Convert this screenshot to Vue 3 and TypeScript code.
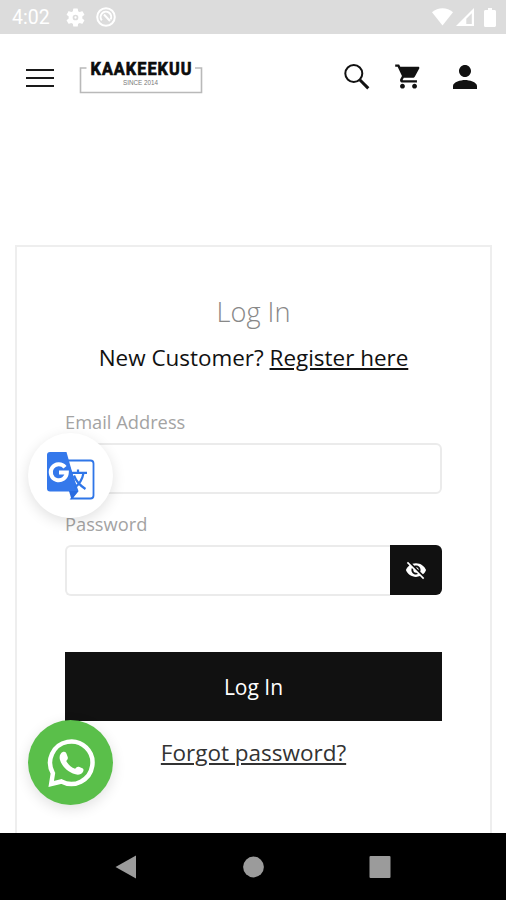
<template>
  <div class="screen">
    <div class="status-bar">
      <span class="clock">4:02</span>
      <svg class="status-gear" viewBox="2 2 20 20">
        <path
          d="M19.14 12.94c.04-.3.06-.61.06-.94s-.02-.64-.07-.94l2.03-1.58a.49.49 0 0 0 .12-.61l-1.92-3.32a.49.49 0 0 0-.59-.22l-2.39.96c-.5-.38-1.03-.7-1.62-.94l-.36-2.54a.48.48 0 0 0-.48-.41h-3.84a.48.48 0 0 0-.47.41l-.36 2.54c-.59.24-1.13.57-1.62.94l-2.39-.96a.48.48 0 0 0-.59.22L2.74 8.87a.48.48 0 0 0 .12.61l2.03 1.58c-.05.3-.09.63-.09.94s.02.64.07.94l-2.03 1.58a.49.49 0 0 0-.12.61l1.92 3.32c.12.22.37.29.59.22l2.39-.96c.5.38 1.03.7 1.62.94l.36 2.54c.05.24.24.41.48.41h3.84c.24 0 .44-.17.47-.41l.36-2.54c.59-.24 1.13-.56 1.62-.94l2.39.96c.22.08.47 0 .59-.22l1.92-3.32a.48.48 0 0 0-.12-.61zM12 15a3 3 0 1 1 0-6 3 3 0 0 1 0 6z"
        />
        <circle cx="12" cy="12" r="1.2" />
      </svg>
      <svg class="status-sync" viewBox="0 0 20 20">
        <circle cx="10" cy="10" r="8.8" />
        <path d="M5.800 13.300A5.300 5.300 0 1 1 14.600 12.400M8 7.500l6 6.500" />
      </svg>
      <div class="status-right">
        <svg width="21" height="18" viewBox="0 0 21 18">
          <path d="M0 4.2C6 -1 15 -1 21 4.2L10.5 17.5z" />
        </svg>
        <svg width="19" height="18" viewBox="0 0 19 18">
          <path fill-rule="evenodd" d="M0 18L18 0v18zM10.3 16h5.500V5.200l-5.500 5.500z" />
        </svg>
        <svg class="battery" width="12" height="19" viewBox="0 0 12 19">
          <path d="M4 0h4v2h2.500c.8 0 1.500.7 1.500 1.500v14c0 .8-.7 1.500-1.500 1.500h-9A1.500 1.500 0 0 1 0 17.500V3.500C0 2.700.7 2 1.500 2H4z" />
        </svg>
      </div>
    </div>

    <header class="header">
      <button class="menu" aria-label="Menu"><i></i><i></i><i></i></button>
      <svg class="logo" width="124" height="36" viewBox="0 0 124 36">
        <path d="M7.500 9H1.500V33.500H122.500V9H116" fill="none" stroke="#b9b9b9" stroke-width="1.600" />
        <text class="brand" x="11.500" y="15.500" textLength="102" lengthAdjust="spacingAndGlyphs">KAAKEEKUU</text>
        <text class="since" x="44" y="26" textLength="35" lengthAdjust="spacingAndGlyphs">SINCE 2014</text>
      </svg>
      <div class="actions">
        <svg width="26" height="26" viewBox="0 0 26 26">
          <circle cx="9.800" cy="9.500" r="8.500" fill="none" stroke="#111" stroke-width="2" />
          <path d="M16 16L24.300 24.400" stroke="#111" stroke-width="3" />
        </svg>
        <svg class="cart" width="29" height="29" viewBox="0 0 24 24">
          <path
            d="M7 18c-1.100 0-1.990.9-1.990 2S5.900 22 7 22s2-.9 2-2-.9-2-2-2zM1 2v2h2l3.600 7.590-1.350 2.450c-.16.280-.25.610-.25.960 0 1.100.9 2 2 2h12v-2H7.420c-.14 0-.25-.11-.25-.25l.03-.12.9-1.630h7.450c.75 0 1.410-.41 1.750-1.030l3.580-6.490c.08-.14.12-.31.12-.48 0-.55-.45-1-1-1H5.210l-.94-2H1zm16 16c-1.100 0-1.990.9-1.990 2s.89 2 1.990 2 2-.9 2-2-.9-2-2-2z"
          />
        </svg>
        <svg class="person" width="36" height="36" viewBox="0 0 24 24">
          <path d="M12 12c2.210 0 4-1.790 4-4s-1.790-4-4-4-4 1.790-4 4 1.790 4 4 4zm0 2c-2.670 0-8 1.340-8 4v2h16v-2c0-2.660-5.330-4-8-4z" />
        </svg>
      </div>
    </header>

    <main class="content">
      <form class="card" @submit.prevent>
        <h1>Log In</h1>
        <p class="register">New Customer? <a href="#">Register here</a></p>
        <label for="email">Email Address</label>
        <input id="email" v-model="email" type="email" />
        <label for="password">Password</label>
        <div class="password-box">
          <input id="password" v-model="password" :type="showPassword ? 'text' : 'password'" />
          <button type="button" class="toggle" aria-label="Show password" @click="togglePassword">
            <svg width="22" height="22" viewBox="0 0 24 24">
              <path
                d="M12 7c2.760 0 5 2.240 5 5 0 .65-.13 1.260-.36 1.830l2.920 2.920c1.510-1.260 2.700-2.890 3.430-4.750-1.730-4.390-6-7.500-11-7.500-1.400 0-2.740.25-3.980.7l2.160 2.160C10.740 7.130 11.350 7 12 7zM2 4.270l2.280 2.280.46.46C3.080 8.300 1.780 10.020 1 12c1.730 4.390 6 7.500 11 7.500 1.550 0 3.030-.3 4.380-.84l.42.42L19.730 22 21 20.730 3.270 3 2 4.270zM7.530 9.800l1.550 1.550c-.05.210-.08.430-.08.650 0 1.660 1.340 3 3 3 .22 0 .44-.03.65-.08l1.550 1.550c-.67.330-1.410.530-2.200.530-2.760 0-5-2.240-5-5 0-.79.2-1.530.53-2.200zm4.310-.78l3.150 3.150.02-.16c0-1.660-1.340-3-3-3l-.17.01z"
              />
            </svg>
          </button>
        </div>
        <button type="submit" class="submit">Log In</button>
        <a href="#" class="forgot">Forgot password?</a>
      </form>
    </main>

    <button class="fab translate" aria-label="Translate">
      <svg width="48" height="48" viewBox="0 0 48 48">
        <path d="M20 8.500H43.500Q46.500 8.500 46.500 11.500V43.500Q46.500 46.500 43.500 46.500H24.500L30.500 39z" fill="#fff" stroke="#2f76e8" stroke-width="1.800" />
        <path d="M3 0H19.500L30.500 39.500H3Q0 39.500 0 36.500V3Q0 0 3 0z" fill="#3478eb" />
        <path d="M24.500 47.500L31 39L22 39z" fill="#2a6ce0" />
        <path d="M24.500 20.800H40M31 17.500V20.800M36.500 21C35.500 27 32 32.500 27.500 35.500M27 23.500C29 29 33 33.500 38.500 37" fill="none" stroke="#2f76e8" stroke-width="2.200" />
        <path d="M18 15.200A8 8 0 1 0 19.800 20.600H12" fill="none" stroke="#fff" stroke-width="4" />
      </svg>
    </button>
    <button class="fab whatsapp" aria-label="WhatsApp">
      <svg width="50" height="50" viewBox="0 0 50 50">
        <path d="M6.900 35.300A21.200 21.200 0 1 1 15.400 43.500L5.200 46z" fill="none" stroke="#fff" stroke-width="4.500" />
        <path
          d="M17.300 13.800C18.900 13.300 20 14.200 20.600 16L21.700 19C22.200 20.500 21.500 21.600 20.200 23C22.300 26.800 25.400 29.500 29.100 30.700C30.500 29.200 31.400 28.300 32.900 28.800L36.300 30.200C38 31 37.700 32.600 36.900 34C35.400 36.400 32.400 37.200 29.500 36.300C21.600 34 16.300 28.700 14.100 22.300C12.800 18.500 14.200 14.900 17.300 13.800z"
          fill="#fff"
        />
      </svg>
    </button>

    <nav class="nav-bar">
      <svg viewBox="0 0 24 24"><path d="M1.500 12L22 .5v23z" /></svg>
      <svg viewBox="0 0 24 24"><circle cx="12.500" cy="12" r="10.400" /></svg>
      <svg viewBox="0 0 24 24"><rect x="1.500" y="1" width="21" height="22" rx="1" /></svg>
    </nav>
  </div>
</template>

<script setup lang="ts">
import { ref } from 'vue'

// Form values
const email = ref<string>('')
const password = ref<string>('')
const showPassword = ref<boolean>(false)

// Functions
const togglePassword = () => {
  showPassword.value = !showPassword.value
}
</script>

<style>
body {
  margin: 0;
  background: #fff;
}
</style>

<style scoped>
.screen {
  position: relative;
  display: flex;
  flex-direction: column;
  height: 900px;
  overflow: hidden;
  background: #fff;
  font-family: 'Open Sans', 'Noto Sans', sans-serif;
  color: #111;
}
* {
  box-sizing: border-box;
}
svg {
  display: block;
  flex: none;
}
button {
  border: 0;
  padding: 0;
  font-family: inherit;
}
.status-bar {
  display: flex;
  align-items: center;
  flex: none;
  height: 34px;
  padding: 0 10px 0 12px;
  background: #dcdcdc;
  color: #fff;
}
.status-bar svg {
  fill: #fff;
}
.clock {
  width: 54px;
  font-family: Roboto, sans-serif;
  font-size: 19.5px;
  line-height: 34px;
  padding-top: 2px;
}
.status-gear {
  width: 19px;
  height: 19px;
}
.status-bar .status-sync {
  width: 20px;
  height: 20px;
  margin-left: 11px;
  fill: none;
  stroke: #fff;
  stroke-width: 2;
}
.status-right {
  display: flex;
  align-items: center;
  gap: 3px;
  margin-left: auto;
}
.battery {
  margin-left: 6px;
}
.header {
  display: flex;
  align-items: center;
  flex: none;
  height: 86px;
  padding: 0 23px 0 26px;
}
.menu {
  display: flex;
  flex-direction: column;
  gap: 6.2px;
  width: 28px;
  margin-top: 2px;
  background: none;
}
.menu i {
  height: 2.2px;
  background: #1a1a1a;
}
.logo {
  margin-left: 25px;
  overflow: visible;
}
.brand {
  font: bold 18.5px Roboto, sans-serif;
  letter-spacing: 1.2px;
  fill: #0c0c0c;
  stroke: #0c0c0c;
  stroke-width: 0.7;
}
.since {
  font: 7px 'Liberation Sans', sans-serif;
  fill: #777;
}
.actions {
  display: flex;
  align-items: center;
  margin-left: auto;
}
.actions svg {
  fill: #111;
}
.cart {
  margin-left: 24px;
  margin-top: -1px;
}
.person {
  margin-left: 24px;
  margin-top: -1px;
}
.content {
  flex: 1;
  min-height: 0;
  overflow: hidden;
  padding: 125px 14px 0 15px;
}
.card {
  display: flex;
  flex-direction: column;
  height: 640px;
  border: 2px solid #eee;
  padding: 47px 48px 0;
}
h1 {
  margin: 0;
  font-size: 27.2px;
  font-weight: 300;
  line-height: 36px;
  text-align: center;
  color: #888;
}
.register {
  margin: 12px 0 0;
  font-size: 22.45px;
  line-height: 32px;
  text-align: center;
  white-space: nowrap;
}
.register a {
  color: inherit;
  text-underline-offset: 2px;
  text-decoration-thickness: 2px;
}
label {
  margin-top: 33px;
  height: 36px;
  padding-top: 1px;
  font-size: 18.3px;
  line-height: 28px;
  color: #a3a3a3;
}
input {
  width: 100%;
  height: 51px;
  border: 2px solid #ebebeb;
  border-radius: 6px;
  padding: 0 14px;
  font: 18px 'Open Sans', sans-serif;
  outline: none;
  background: #fff;
}
input + label {
  margin-top: 15px;
}
.password-box {
  display: flex;
}
.password-box input {
  flex: 1;
  min-width: 0;
  border-radius: 6px 0 0 6px;
  border-right: 0;
}
.toggle {
  display: grid;
  place-items: center;
  width: 52px;
  height: 50px;
  border-radius: 0 6px 6px 0;
  background: #111;
}
.toggle svg {
  fill: #fff;
}
.submit {
  flex: none;
  height: 69px;
  margin-top: 56px;
  background: #111;
  color: #fff;
  font-size: 21px;
}
.forgot {
  align-self: center;
  margin-top: 16px;
  font-size: 22.5px;
  line-height: 32px;
  color: #333;
  text-underline-offset: 2px;
  text-decoration-thickness: 1.5px;
}
.fab {
  position: absolute;
  left: 28px;
  display: grid;
  place-items: center;
  width: 85px;
  height: 85px;
  border-radius: 50%;
  box-shadow: 0 4px 14px rgba(0, 0, 0, 0.12);
}
.translate {
  top: 433px;
  background: #fff;
}
.whatsapp {
  top: 720px;
  background: #5abf4a;
}
.nav-bar {
  display: flex;
  align-items: center;
  justify-content: space-between;
  flex: none;
  height: 67px;
  padding: 0 114px;
  background: #000;
}
.nav-bar svg {
  width: 24px;
  height: 24px;
  fill: #9b9b9b;
}
</style>
